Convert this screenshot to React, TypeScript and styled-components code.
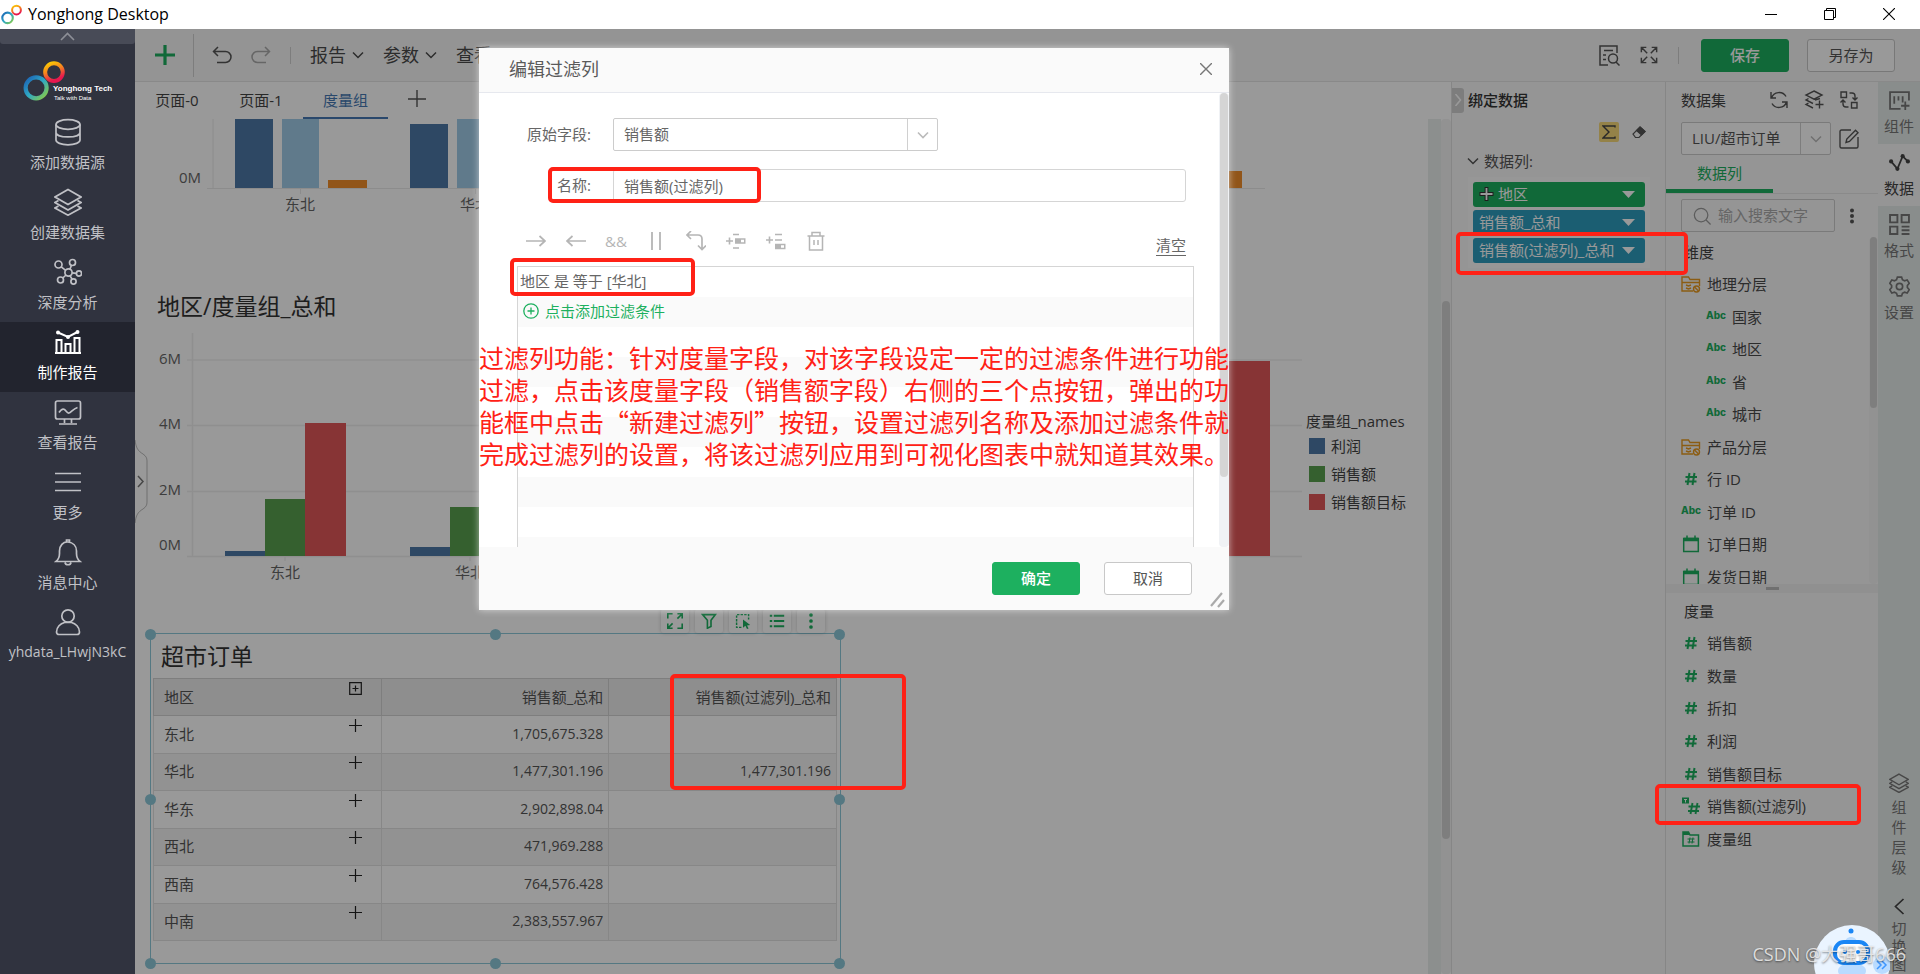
import React from "react";
import styled, { createGlobalStyle, css } from "styled-components";

const GREEN = "#1db05f";
const FONT = `"Open Sans", "Noto Sans CJK SC", sans-serif`;

const Global = createGlobalStyle`
  *, *::before, *::after { box-sizing: border-box; }
  body { margin: 0; font-family: ${FONT}; font-size: 15px; line-height: 20px; color: #444; background: #fff; overflow: hidden; }
  button, input, select { font: inherit; color: inherit; }
  button { padding: 0; border: 0; background: none; cursor: pointer; }
  svg { display: block; flex: none; }
  h1, h2, p { margin: 0; font-weight: 400; }
`;

/* ---------- icons ---------- */

type IconProps = {
  size?: number;
  box?: string;
  sw?: number;
  color?: string;
  children: React.ReactNode;
};
const Icon = ({ size = 20, box = "0 0 20 20", sw = 1.4, color = "currentColor", children }: IconProps) => (
  <svg width={size} height={size} viewBox={box} fill="none" stroke={color} strokeWidth={sw} aria-hidden="true">
    {children}
  </svg>
);

const ChevronDown = ({ size = 12, sw = 1.5 }: { size?: number; sw?: number }) => (
  <Icon size={size} box="0 0 12 12" sw={sw}><path d="M1 3.500 6 8.500 11 3.500" /></Icon>
);
const IconDatabase = () => (
  <Icon size={28} box="0 0 28 28" sw={1.7}>
    <ellipse cx="14" cy="6.500" rx="12" ry="4.800" />
    <path d="M2 6.500V22c0 2.600 5 4.800 12 4.800S26 24.600 26 22V6.500M2 14.500c0 2.600 5 4.400 12 4.400s12-1.800 12-4.400" />
  </Icon>
);
const IconLayers = ({ size = 28, sw = 1.7 }: { size?: number; sw?: number }) => (
  <Icon size={size} box="0 0 28 28" sw={sw}>
    <path d="M14 1.500 27 9 14 16.500 1 9ZM4.500 12.500 1 14.500 14 22l13-7.500-3.500-2M4.500 18 1 20l13 7.200L27 20l-3.500-2" />
  </Icon>
);
const IconNetwork = () => (
  <Icon size={28} box="0 0 28 28" sw={1.7}>
    <circle cx="14.500" cy="14.500" r="3.600" />
    <circle cx="4.500" cy="6.500" r="3.500" />
    <circle cx="18.500" cy="4.500" r="3" />
    <circle cx="25" cy="15.500" r="2.600" />
    <circle cx="6.500" cy="22" r="3" />
    <circle cx="19.500" cy="23.500" r="2.600" />
    <path d="m7.200 8.800 4.500 3.500M17.500 7.200l-1.600 4M18 14.900l4.400.4M12 17l-3.200 3M16 17.800l2.200 3.600" />
  </Icon>
);
const IconReport = () => (
  <Icon size={28} box="0 0 28 28" sw={2}>
    <path d="M1 25h26M2.500 25V12h5v13M11.500 25v-9h5v9M20.500 25V10h5v15M4 4.500 14 9l9.500-5" />
    <circle cx="4" cy="4.500" r="1" /><circle cx="14" cy="9" r="1" /><circle cx="23.500" cy="4" r="1" />
  </Icon>
);
const IconMonitor = () => (
  <Icon size={28} box="0 0 28 28" sw={1.7}>
    <rect x="1.500" y="3" width="25" height="18" rx="2" />
    <path d="M5 14.500c2-3 4-4 5.500-3s2.500 4 4.500 3.500 4-4 8.500-5.500M10.500 21v4M17.500 21v4M5 26h18" />
  </Icon>
);
const IconMenu = () => (
  <Icon size={28} box="0 0 28 28" sw={1.7}><path d="M1 5.500h26M1 14h26M1 22.500h26" /></Icon>
);
const IconBell = () => (
  <Icon size={28} box="0 0 28 28" sw={1.7}>
    <path d="M2 23.500h24c-2.500-2-3.500-4-3.500-8v-2.500c0-5-3.500-8.500-8.500-9s-8.500 4-8.500 9v2.500c0 4-1 6-3.500 8ZM11 24.500c.5 3 5.500 3 6 0M12.500 4V2h3v2" />
  </Icon>
);
const IconUser = () => (
  <Icon size={28} box="0 0 28 28" sw={1.7}>
    <circle cx="14" cy="8" r="6.200" />
    <path d="M2.500 24c0-5 4-8.500 8-9.500h7c4 1 8 4.500 8 9.500 0 1.500-1 2.500-2.500 2.500H5c-1.500 0-2.500-1-2.500-2.500Z" />
  </Icon>
);

const Rings = ({ size }: { size: number }) => (
  <svg width={size} height={size} viewBox="0 0 40 40" fill="none" aria-hidden="true">
    <defs>
      <linearGradient id={`cool${size}`} x1="0" y1="0" x2="1" y2="1">
        <stop offset="0.1" stopColor="#1f6fb8" /><stop offset="0.5" stopColor="#2fa9c4" /><stop offset="1" stopColor="#8fce3f" />
      </linearGradient>
      <linearGradient id={`warm${size}`} x1="0" y1="0" x2="0.4" y2="1">
        <stop offset="0" stopColor="#fbd000" /><stop offset="0.5" stopColor="#f58220" /><stop offset="1" stopColor="#e6174f" />
      </linearGradient>
    </defs>
    <circle cx="12.500" cy="26.500" r="10" stroke={`url(#cool${size})`} strokeWidth="4" />
    <circle cx="29.500" cy="11.500" r="8.400" stroke={`url(#warm${size})`} strokeWidth="3.800" />
  </svg>
);

const IconAbc = styled.span`
  padding-bottom: 4px;
  font: 800 10px/14px Inter, "Liberation Sans", sans-serif;
  color: ${GREEN};
`;
const IconHash = () => (
  <Icon size={20} sw={2} color={GREEN}><path d="M8.500 4 6.500 16M13.500 4l-2 12M4.500 8H16M4 12.500h11.500" /></Icon>
);
const IconFolder = () => (
  <Icon size={20} color="#e89a20" sw={1.4}>
    <path d="M12 17H1V3h6.500L9 5.500h9.500V12M1 8.500h17.500M5 11l2.500 1L10 11M5 14l2.500 1 2.500-1" />
    <circle cx="15.500" cy="15" r="3" /><path d="m13.500 13 4 4" />
  </Icon>
);
const IconCalendar = () => (
  <Icon size={20} color={GREEN} sw={1.5}><path d="M2.700 4.500h14.600v13H2.700Z" /><path d="M2.700 5.500h14.600" strokeWidth={3.500} /><path d="M6 1.500v4M14 1.500v4" /></Icon>
);
const IconFilterHash = () => (
  <Icon size={20} color={GREEN} sw={1.9}>
    <path d="m11.500 7-2 11M16.500 7l-2 11M7.500 10.500H19M7 15h11" /><path d="M1 1.500h7v6H1Z" fill={GREEN} stroke="none" /><path d="M3 3.500h3M4.500 3.500v3" stroke="#fff" strokeWidth={1} />
  </Icon>
);
const IconGroup = () => (
  <Icon size={20} color={GREEN} sw={1.5}>
    <path d="M2 17V3h5.500l1.500 3h8.500v11Z" /><path d="M2 4.500h6" strokeWidth={3} /><path d="m9 8.500-1 6M12 8.500l-1 6M6.500 10h7M6.500 13h7" strokeWidth={1.100} />
  </Icon>
);

/* ---------- window frame ---------- */

const Window = styled.div`
  display: flex;
  flex-direction: column;
  height: 100vh;
`;
const TitleBar = styled.header`
  display: flex;
  align-items: center;
  gap: 6px;
  height: 29px;
  flex: none;
  padding: 0 2px 1px 1px;
  color: #000;
  font-size: 16px;
  line-height: 22px;
`;
const WindowButtons = styled.div`
  display: flex;
  margin-left: auto;
  button { display: flex; justify-content: center; width: 59px; }
`;
const Body = styled.div`
  display: flex;
  flex: 1;
  min-height: 0;
`;

/* ---------- side navigation ---------- */

const Sidebar = styled.nav`
  display: flex;
  flex-direction: column;
  width: 135px;
  flex: none;
  background: #30333f;
  color: #c0c1c6;
`;
const Collapse = styled.button`
  display: flex;
  justify-content: center;
  align-items: center;
  height: 15px;
  background: #484b57;
  border-radius: 0 0 3px 3px;
  color: #8d8f97;
`;
const Brand = styled.div`
  display: flex;
  height: 68px;
  padding: 16px 0 0 23px;
`;
const BrandText = styled.div`
  margin: 24px 0 0 -12px;
  font: 700 8px/10px "Liberation Sans", sans-serif;
  color: #fff;
  white-space: nowrap;
  small { display: block; padding-left: 1px; font-size: 6px; line-height: 9px; font-weight: 400; }
`;
const NavItem = styled.button<{ $active?: boolean }>`
  display: flex;
  flex-direction: column;
  align-items: center;
  gap: 6px;
  height: 70px;
  padding-top: 6px;
  ${(p) => p.$active && css`background: #22242e; color: #fff;`}
`;
const UserName = styled.span`
  font-size: 14px;
`;

/* ---------- main area ---------- */

const Main = styled.main`
  position: relative;
  display: flex;
  flex-direction: column;
  flex: 1;
  min-width: 0;
  overflow: hidden;
`;
const Toolbar = styled.div`
  display: flex;
  align-items: center;
  height: 53px;
  flex: none;
  padding: 0 25px 0 19px;
  background: #f7f7f7;
  border-bottom: 1px solid #e4e4e4;
  font-size: 18px;
`;
const ToolButton = styled.button<{ $w: number; $muted?: boolean }>`
  display: flex;
  align-items: center;
  justify-content: center;
  width: ${(p) => p.$w}px;
  height: 32px;
  color: ${(p) => (p.$muted ? "#aaa" : "#555")};
`;
const Rule = styled.i<{ $h: number; $mx: number }>`
  width: 1px;
  height: ${(p) => p.$h}px;
  margin: 0 ${(p) => p.$mx}px;
  background: #d0d0d0;
`;
const ToolGroup = styled.div<{ $left: number; $gap: number }>`
  display: flex;
  gap: ${(p) => p.$gap}px;
  margin-left: ${(p) => p.$left}px;
`;
const MenuButton = styled.button`
  display: flex;
  align-items: center;
  gap: 6px;
  white-space: nowrap;
  color: #4a4a4a;
`;
const Spacer = styled.span`
  flex: 1;
`;
const Button = styled.button<{ $primary?: boolean }>`
  width: 88px;
  height: 33px;
  padding-bottom: 1px;
  border: 1px solid ${(p) => (p.$primary ? GREEN : "#c8c8c8")};
  border-radius: 3px;
  background: ${(p) => (p.$primary ? GREEN : "#fff")};
  color: ${(p) => (p.$primary ? "#fff" : "#555")};
  font-size: 15px;
  font-weight: ${(p) => (p.$primary ? 500 : 400)};
`;
const Workspace = styled.div`
  display: grid;
  grid-template-columns: minmax(0, 1fr) 214px 213px 42px;
  flex: 1;
  min-height: 0;
`;

/* ---------- report canvas ---------- */

const Report = styled.section`
  display: flex;
  flex-direction: column;
  min-height: 0;
`;
const Tabs = styled.div`
  display: flex;
  height: 37px;
  flex: none;
`;
const Tab = styled.button<{ $active?: boolean }>`
  min-width: 84px;
  padding: 0 20px;
  border-bottom: 2px solid ${(p) => (p.$active ? "#4679b4" : "transparent")};
  color: ${(p) => (p.$active ? "#4679b4" : "#444")};
  white-space: nowrap;
`;
const Scroller = styled.div`
  display: flex;
  flex: 1;
  min-height: 0;
`;
const Page = styled.div`
  position: relative;
  flex: 1;
  min-width: 0;
  overflow: hidden;
  background: #fff;
`;
const Gutter = styled.div`
  width: 13px;
  background: #eaeeed;
`;
const Track = styled.div<{ $w: number; $top: number; $thumb: number; $color?: string; $bg?: string }>`
  width: ${(p) => p.$w}px;
  flex: none;
  padding: ${(p) => p.$top}px 1px 0;
  background: ${(p) => p.$bg ?? "#f4f4f4"};
  border-radius: 4px;
  &::before {
    content: "";
    display: block;
    height: ${(p) => p.$thumb}px;
    border-radius: 4px;
    background: ${(p) => p.$color ?? "#d3d3d3"};
  }
`;
const WidgetTitle = styled.h2`
  font-size: 23px;
  line-height: 32px;
  color: #333;
  white-space: nowrap;
`;
const ChartTitle = styled(WidgetTitle)`
  margin: 65px 0 2px 22px;
`;
const ChartRow = styled.div`
  display: flex;
`;
const ChartSvg = styled.svg`
  font-family: ${FONT};
  font-size: 15px;
  fill: #666;
`;
const Legend = styled.ul`
  margin: 86px 0 0;
  padding: 0;
  list-style: none;
  color: #444;
  white-space: nowrap;
  li { display: flex; align-items: center; gap: 6px; height: 28px; padding-left: 3px; }
  li:first-child { height: 22px; padding: 0; }
`;
const Swatch = styled.i<{ $c: string }>`
  width: 16px;
  height: 16px;
  background: ${(p) => p.$c};
`;
const Drawer = styled.button`
  position: absolute;
  left: 0;
  top: 320px;
  color: #777;
`;

const Widget = styled.section`
  position: relative;
  width: 691px;
  height: 331px;
  margin: 43px 0 0 15px;
  padding: 6px 2px 0;
  border: 1px solid #8cc8d9;
`;
const TableTitle = styled(WidgetTitle)`
  margin: 0 0 6px 8px;
`;
const Handle = styled.i<{ $x: number; $y: number }>`
  position: absolute;
  left: calc(${(p) => p.$x}% - 6px);
  top: calc(${(p) => p.$y}% - 5px);
  width: 11px;
  height: 11px;
  border-radius: 50%;
  background: #8cc8d9;
`;
const FloatTools = styled.div`
  position: absolute;
  right: 15px;
  top: -25px;
  display: flex;
  gap: 6px;
  button {
    display: flex;
    align-items: center;
    justify-content: center;
    width: 28px;
    height: 24px;
    border-radius: 3px;
    background: #fff;
    box-shadow: 0 0 4px rgba(0, 0, 0, 0.2);
    color: ${GREEN};
  }
`;
const Table = styled.table`
  width: 684px;
  height: 263px;
  border-collapse: collapse;
  table-layout: fixed;
  color: #555;
  tr { height: 37px; }
  th, td {
    padding: 0 5px 1px;
    border: 1px solid #e2e2e2;
    font-weight: 400;
    text-align: right;
  }
  td { font-size: 14px; }
  th:first-child, td:first-child { padding-left: 10px; font-size: 15px; text-align: left; }
  thead th { background: #ededed; border-color: #d2d2d2; }
  tbody tr:nth-child(even) { background: #f3f3f3; }
`;
const RegionCell = styled.span`
  display: flex;
  justify-content: space-between;
  padding-right: 14px;
  svg { margin-top: -5px; color: #222; }
`;

/* ---------- binding panel ---------- */

const Panel = styled.aside`
  display: flex;
  flex-direction: column;
  min-height: 0;
  border-left: 1px solid #e0e0e0;
  background: #f9f9f9;
`;
const BindHead = styled.div`
  display: flex;
  align-items: center;
  gap: 4px;
  height: 36px;
  color: #333;
  font-weight: 500;
  button {
    display: flex;
    align-items: center;
    justify-content: center;
    width: 12px;
    height: 25px;
    border-radius: 0 3px 3px 0;
    background: #d0d0d0;
    color: #fff;
  }
`;
const BindTools = styled.div`
  display: flex;
  align-items: center;
  justify-content: flex-end;
  gap: 13px;
  height: 28px;
  padding: 0 20px 0 0;
`;
const SumButton = styled.button`
  display: flex;
  align-items: center;
  justify-content: center;
  width: 20px;
  height: 20px;
  border-radius: 2px;
  background: #f7d978;
  color: #444;
`;
const BindSection = styled.div`
  display: flex;
  align-items: center;
  gap: 5px;
  height: 29px;
  padding-left: 15px;
  color: #555;
`;
const Pills = styled.div`
  display: flex;
  flex-direction: column;
  gap: 3px;
  margin: 2px 15px 0 16px;
  padding: 5px;
  background: #fcfcfc;
`;
const Pill = styled.button<{ $c: string }>`
  display: flex;
  align-items: center;
  gap: 4px;
  height: 25px;
  padding: 0 10px 1px 6px;
  border-radius: 3px;
  background: ${(p) => p.$c};
  color: #fff;
  white-space: nowrap;
  svg:last-child { margin-left: auto; }
`;

/* ---------- data set panel ---------- */

const DataHead = styled.div`
  display: flex;
  align-items: center;
  gap: 15px;
  height: 36px;
  flex: none;
  padding: 0 19px 0 15px;
  color: #555;
  span { flex: 1; white-space: nowrap; color: #444; }
`;
const DataSelect = styled.div`
  display: flex;
  align-items: center;
  gap: 8px;
  flex: none;
  margin: 4px 0 0;
  padding-left: 15px;
  color: #555;
`;
const SelectBox = styled.div<{ $w: string }>`
  display: flex;
  width: ${(p) => p.$w};
  height: 33px;
  border: 1px solid #ccc;
  border-radius: 2px;
  background: #fff;
  select {
    flex: 1;
    min-width: 0;
    padding: 0 0 2px 10px;
    border: 0;
    background: none;
    appearance: none;
    outline: 0;
  }
  span {
    display: flex;
    align-items: center;
    justify-content: center;
    width: 30px;
    border-left: 1px solid #d0d0d0;
    color: #bbb;
  }
`;
const DataTab = styled.div`
  display: flex;
  height: 39px;
  flex: none;
  border-bottom: 1px solid #e6e6e6;
  button { width: 107px; padding: 2px 0 0; border-bottom: 4px solid ${GREEN}; color: ${GREEN}; }
`;
const SearchRow = styled.div`
  display: flex;
  align-items: center;
  gap: 8px;
  flex: none;
  padding: 5px 0 5px 15px;
  color: #555;
`;
const SearchBox = styled.label`
  display: flex;
  align-items: center;
  gap: 7px;
  width: 154px;
  height: 33px;
  padding-left: 11px;
  border: 1px solid #ccc;
  border-radius: 2px;
  color: #999;
  input { flex: 1; min-width: 0; padding: 0 0 2px; border: 0; background: none; outline: 0; }
  input::placeholder { color: #aaa; opacity: 1; }
`;
const Dimensions = styled.div`
  display: flex;
  height: 347px;
  flex: none;
  overflow: hidden;
`;
const FieldBlock = styled.div`
  flex: 1;
  min-width: 0;
`;
const GroupName = styled.h2`
  height: 32px;
  padding-left: 18px;
  font-size: 15px;
  line-height: 30px;
  color: #444;
`;
const Fields = styled.ul<{ $h: number }>`
  display: grid;
  grid-auto-rows: 1fr;
  height: ${(p) => p.$h}px;
  margin: 0;
  padding: 0 0 0 15px;
  list-style: none;
`;
const Field = styled.li<{ $child?: boolean }>`
  display: flex;
  align-items: center;
  gap: 6px;
  padding: 0 0 2px ${(p) => (p.$child ? 25 : 0)}px;
  color: #4a4a4a;
  white-space: nowrap;
`;
const FieldIcon = styled.span`
  display: flex;
  align-items: center;
  justify-content: center;
  width: 20px;
`;
const Splitter = styled.div`
  display: flex;
  justify-content: center;
  height: 9px;
  flex: none;
  padding-top: 3px;
  background: #f0f0f0;
  &::before { content: ""; width: 13px; height: 3px; background: #bbb; }
`;
const Measures = styled.div`
  padding-top: 3px;
`;

/* ---------- right rail ---------- */

const Rail = styled.aside`
  display: flex;
  flex-direction: column;
  min-height: 0;
  background: #e5ebe9;
  color: #777;
`;
const RailItem = styled.button<{ $active?: boolean }>`
  display: flex;
  flex-direction: column;
  align-items: center;
  gap: 5px;
  height: 62px;
  flex: none;
  padding-top: 8px;
  ${(p) => p.$active && css`background: #f9f9f9; color: #444;`}
`;
const RailBottom = styled.div`
  display: flex;
  flex-direction: column;
  align-items: center;
  margin-top: auto;
`;
const Upright = styled.span<{ $lh: number; $mb: number }>`
  width: 15px;
  margin: 4px 0 ${(p) => p.$mb}px;
  line-height: ${(p) => p.$lh}px;
  word-break: break-all;
`;

/* ---------- dialog ---------- */

const Shade = styled.div`
  position: absolute;
  inset: 0;
  z-index: 1;
  background: rgba(0, 0, 0, 0.4);
`;
const Dialog = styled.section`
  position: absolute;
  left: 344px;
  top: 19px;
  z-index: 2;
  width: 750px;
  background: #fff;
  color: #666;
  box-shadow: 0 0 7px rgba(255, 255, 255, 0.6);
`;
const DialogHead = styled.header`
  display: flex;
  align-items: center;
  justify-content: space-between;
  height: 45px;
  padding: 0 17px 2px 30px;
  border-bottom: 1px solid #e6e8ee;
  background: #fafafa;
  h1 { font-size: 18px; line-height: 24px; color: #5a5a5a; }
  button { color: #777; }
`;
const DialogBody = styled.div`
  display: flex;
  height: 454px;
  overflow: hidden;
`;
const Form = styled.div`
  flex: 1;
  min-width: 0;
  padding-top: 25px;
`;
const FormRow = styled.div`
  display: grid;
  grid-template-columns: 112px 1fr;
  column-gap: 22px;
  align-items: center;
  margin: 0 33px 18px 0;
  label { padding-bottom: 2px; text-align: right; }
`;
const TextInput = styled.input`
  width: 100%;
  height: 33px;
  padding: 0 10px 1px;
  border: 1px solid #d5d5d5;
  border-radius: 3px;
  outline: 0;
`;
const ConditionTools = styled.div`
  display: flex;
  height: 30px;
  margin: 24px 33px 10px 37px;
  color: #b5b5b5;
  button { display: flex; align-items: center; justify-content: center; width: 40px; }
`;
const Clear = styled.a`
  align-self: flex-end;
  margin-left: auto;
  border-bottom: 1px solid #666;
  line-height: 20px;
  color: #666;
  text-decoration: none;
`;
const Conditions = styled.ul`
  height: 320px;
  margin: 0 25px 0 38px;
  padding: 0;
  border: 1px solid #d5d5d5;
  list-style: none;
  li { display: flex; align-items: center; height: 30px; padding: 0 0 2px 2px; white-space: pre; }
  li:nth-child(even) { background: #fafafa; }
`;
const AddCondition = styled.button`
  display: flex;
  align-items: center;
  gap: 6px;
  padding-left: 3px;
  color: ${GREEN};
`;
const DialogFoot = styled.footer`
  display: flex;
  align-items: center;
  justify-content: flex-end;
  gap: 24px;
  height: 63px;
  padding: 0 37px 0 0;
  background: #fafafa;
`;
const Grip = styled.span`
  position: absolute;
  right: 3px;
  bottom: 2px;
`;

/* ---------- notes drawn over the screen ---------- */

const markFrame = css`
  position: absolute;
  z-index: 3;
  border: 4px solid #ff2116;
  border-radius: 5px;
  pointer-events: none;
`;
const NameMark = styled.div`
  ${markFrame}
  left: 69px; top: 119px; width: 213px; height: 36px;
`;
const ConditionMark = styled.div`
  ${markFrame}
  left: 31px; top: 210px; width: 185px; height: 38px;
`;
const BindMark = styled.div`
  ${markFrame}
  right: 232px; top: 203px; width: 232px; height: 43px;
`;
const MeasureMark = styled.div`
  ${markFrame}
  right: 59px; top: 755px; width: 206px; height: 41px;
`;
const TableMark = styled.div`
  ${markFrame}
  left: 535px; top: 645px; width: 236px; height: 116px;
`;
const Note = styled.p`
  position: absolute;
  left: 0;
  top: 293px;
  width: 760px;
  font-family: "Noto Sans CJK SC", sans-serif;
  font-size: 25px;
  line-height: 32px;
  color: #ff2116;
  white-space: pre-line;
`;
const Robot = styled.button`
  position: absolute;
  right: 30px;
  bottom: -27px;
  z-index: 3;
`;
const Watermark = styled.span`
  position: absolute;
  right: 14px;
  bottom: 8px;
  z-index: 4;
  font-size: 18px;
  line-height: 24px;
  color: rgba(235, 235, 235, 0.9);
  text-shadow: 0 1px 2px rgba(0, 0, 0, 0.5);
  white-space: nowrap;
`;

/* ---------- data ---------- */

const nav = [
  { label: "添加数据源", icon: <IconDatabase /> },
  { label: "创建数据集", icon: <IconLayers /> },
  { label: "深度分析", icon: <IconNetwork /> },
  { label: "制作报告", icon: <IconReport />, active: true },
  { label: "查看报告", icon: <IconMonitor /> },
  { label: "更多", icon: <IconMenu /> },
  { label: "消息中心", icon: <IconBell /> },
];
const rows = [
  ["东北", "1,705,675.328", ""],
  ["华北", "1,477,301.196", "1,477,301.196"],
  ["华东", "2,902,898.04", ""],
  ["西北", "471,969.288", ""],
  ["西南", "764,576.428", ""],
  ["中南", "2,383,557.967", ""],
];
const abc = <IconAbc>Abc</IconAbc>;
const dimensions = [
  { label: "地理分层", icon: <IconFolder /> },
  { label: "国家", icon: abc, child: true },
  { label: "地区", icon: abc, child: true },
  { label: "省", icon: abc, child: true },
  { label: "城市", icon: abc, child: true },
  { label: "产品分层", icon: <IconFolder /> },
  { label: "行 ID", icon: <IconHash /> },
  { label: "订单 ID", icon: abc },
  { label: "订单日期", icon: <IconCalendar /> },
  { label: "发货日期", icon: <IconCalendar /> },
];
const measures = [
  { label: "销售额", icon: <IconHash /> },
  { label: "数量", icon: <IconHash /> },
  { label: "折扣", icon: <IconHash /> },
  { label: "利润", icon: <IconHash /> },
  { label: "销售额目标", icon: <IconHash /> },
  { label: "销售额(过滤列)", icon: <IconFilterHash /> },
  { label: "度量组", icon: <IconGroup /> },
];
const note = `过滤列功能：针对度量字段，对该字段设定一定的过滤条件进行功能
过滤，点击该度量字段（销售额字段）右侧的三个点按钮，弹出的功
能框中点击“新建过滤列”按钮，设置过滤列名称及添加过滤条件就
完成过滤列的设置，将该过滤列应用到可视化图表中就知道其效果。`;

const Bar = ({ x, y, w, base, c }: { x: number; y: number; w: number; base: number; c: string }) => (
  <rect x={x} y={y} width={w} height={base - y} fill={c} />
);

const TopChart = () => (
  <ChartSvg width="1150" height="106" viewBox="135 119 1150 106" role="img" aria-label="东北 华北">
    <path d="M213 119v69M207 188.500h1058M300.500 189v5M475.500 189v5" stroke="#eaeaea" fill="none" />
    <Bar x={235} y={119} w={38} base={188} c="#4e79a7" />
    <Bar x={282} y={119} w={37} base={188} c="#a0cbe8" />
    <Bar x={328} y={180} w={39} base={188} c="#f28e2b" />
    <Bar x={410} y={124} w={38} base={188} c="#4e79a7" />
    <Bar x={457} y={119} w={37} base={188} c="#a0cbe8" />
    <Bar x={1203} y={171} w={39} base={188} c="#f28e2b" />
    <text x="201" y="183" textAnchor="end">0M</text>
    <text x="300" y="210" textAnchor="middle">东北</text>
    <text x="475" y="210" textAnchor="middle">华北</text>
  </ChartSvg>
);

const MeasureChart = () => (
  <ChartSvg width="1171" height="266" viewBox="135 324 1171 266" role="img" aria-label="地区/度量组_总和">
    <path d="M192.500 333v223M187 360h1115M187 425.500h1115M187 491.500h1115M187 556.500h1115M285 557v4M470 557v4" stroke="#efefef" strokeWidth="1.500" fill="none" />
    <Bar x={225} y={551} w={40} base={556} c="#4e79a7" />
    <Bar x={265} y={499} w={40} base={556} c="#59a14f" />
    <Bar x={305} y={423} w={41} base={556} c="#e15759" />
    <Bar x={410} y={547} w={40} base={556} c="#4e79a7" />
    <Bar x={450} y={507} w={40} base={556} c="#59a14f" />
    <Bar x={1229} y={361} w={41} base={556} c="#e15759" />
    <text x="181" y="364" textAnchor="end">6M</text>
    <text x="181" y="429" textAnchor="end">4M</text>
    <text x="181" y="495" textAnchor="end">2M</text>
    <text x="181" y="550" textAnchor="end">0M</text>
    <text x="285" y="578" textAnchor="middle">东北</text>
    <text x="470" y="578" textAnchor="middle">华北</text>
  </ChartSvg>
);

const PlusThin = ({ boxed }: { boxed?: boolean }) => (
  <Icon size={13} box="0 0 13 13" sw={1.2}>
    {boxed ? <path d="M.7.700h11.600v11.600H.7ZM6.500 3.500v6M3.500 6.500h6" /> : <path d="M6.500 0v13M0 6.500h13" />}
  </Icon>
);
const IconExpand = () => (
  <Icon size={18} sw={1.6}>
    <path d="M7 1.500H1.500V7M1.500 1.500 8 8M13 1.500h5.500V7M18.500 1.500 12 8M7 18.500H1.500V13M1.500 18.500 8 12M13 18.500h5.500V13M18.500 18.500 12 12" />
  </Icon>
);
const Triangle = () => (
  <svg width="13" height="7" viewBox="0 0 13 7" aria-hidden="true"><path d="M0 0h13L6.500 7Z" fill="#fff" /></svg>
);

const FieldList = ({ items, height }: { items: { label: string; icon: React.ReactNode; child?: boolean }[]; height: number }) => (
  <Fields $h={height}>
    {items.map((f) => (
      <Field key={f.label} $child={f.child}>
        <FieldIcon>{f.icon}</FieldIcon>
        {f.label}
      </Field>
    ))}
  </Fields>
);

const FilterDialog = () => (
  <Dialog role="dialog" aria-labelledby="dialog-title">
    <DialogHead>
      <h1 id="dialog-title">编辑过滤列</h1>
      <button aria-label="关闭"><Icon size={12} box="0 0 12 12" sw={1.4}><path d="m0 0 12 12M12 0 0 12" /></Icon></button>
    </DialogHead>
    <DialogBody>
      <Form>
        <FormRow>
          <label htmlFor="source-field">原始字段:</label>
          <SelectBox $w="325px">
            <select id="source-field" defaultValue="销售额"><option>销售额</option></select>
            <span><ChevronDown sw={1.6} /></span>
          </SelectBox>
        </FormRow>
        <FormRow>
          <label htmlFor="column-name">名称:</label>
          <TextInput id="column-name" defaultValue="销售额(过滤列)" />
        </FormRow>
        <ConditionTools>
          <button aria-label="右移"><Icon sw={1.7}><path d="M0 10h19M13.500 5l5.500 5-5.500 5" /></Icon></button>
          <button aria-label="左移"><Icon sw={1.7}><path d="M20 10H1M6.500 5 1 10l5.500 5" /></Icon></button>
          <button>&amp;&amp;</button>
          <button aria-label="或"><Icon sw={1.8}><path d="M6 1v18M14 1v18" /></Icon></button>
          <button aria-label="切换"><Icon sw={1.7}><path d="M5 0 1 4l4 4M1 4h11c3 0 4 1 4 4v10M12 14.500l4 4 4-4" /></Icon></button>
          <button aria-label="上方插入"><Icon sw={1.6}><path d="M0 10h7M3.500 6.500v7M7 3.500h6M7 17h6" /><path d="M9 10h10.500" strokeWidth={5.500} /><path d="M15 10h3" stroke="#fff" strokeWidth={2.500} /></Icon></button>
          <button aria-label="下方插入"><Icon sw={1.6}><path d="M0 9h7M3.500 5.500v7M9 3.500h7M9 9h7" /><path d="M9 15.500h10.500" strokeWidth={5.500} /><path d="M15 15.500h3" stroke="#fff" strokeWidth={2.500} /></Icon></button>
          <button aria-label="删除"><Icon sw={1.5}><path d="M1.500 5h17M3.500 5v14h13V5M6 5V1.500h8V5M8 9v5M12 9v5" /></Icon></button>
          <Clear href="#clear">清空</Clear>
        </ConditionTools>
        <Conditions>
          <li>地区 是 等于 [华北]</li>
          <li>
            <AddCondition>
              <Icon size={16} box="0 0 16 16" sw={1.3}><circle cx="8" cy="8" r="7.200" /><path d="M8 4.500v7M4.500 8h7" /></Icon>
              点击添加过滤条件
            </AddCondition>
          </li>
          {[3, 4, 5, 6, 7, 8, 9, 10].map((n) => <li key={n} />)}
        </Conditions>
      </Form>
      <Track $w={10} $top={0} $thumb={384} $color="#d5d5d5" $bg="#f0f2f5" />
    </DialogBody>
    <DialogFoot>
      <Button $primary>确定</Button>
      <Button>取消</Button>
    </DialogFoot>
    <Grip><Icon size={16} box="0 0 16 16" sw={2.2} color="#aaa"><path d="M1 14 12 1M8 15l6-7" /></Icon></Grip>
    <NameMark />
    <ConditionMark />
    <Note>{note}</Note>
  </Dialog>
);

export default function App() {
  return (
    <Window>
      <Global />
      <TitleBar>
        <Rings size={21} />
        Yonghong Desktop
        <WindowButtons>
          <button aria-label="最小化"><Icon size={12} box="0 0 12 12" sw={1}><path d="M0 6.500h12" /></Icon></button>
          <button aria-label="还原"><Icon size={12} box="0 0 12 12" sw={1}><path d="M.5 2.500h9v9h-9ZM2.500 2.500v-2h9v9h-2" /></Icon></button>
          <button aria-label="关闭窗口"><Icon size={12} box="0 0 12 12" sw={1.1}><path d="m0 0 12 12M12 0 0 12" /></Icon></button>
        </WindowButtons>
      </TitleBar>
      <Body>
        <Sidebar>
          <Collapse aria-label="收起"><Icon size={15} box="0 0 15 15" sw={1.6}><path d="m1 11 6.500-6.500L14 11" /></Icon></Collapse>
          <Brand>
            <Rings size={42} />
            <BrandText>Yonghong Tech<small>Talk with Data</small></BrandText>
          </Brand>
          {nav.map((n) => (
            <NavItem key={n.label} $active={n.active}>{n.icon}{n.label}</NavItem>
          ))}
          <NavItem><IconUser /><UserName>yhdata_LHwjN3kC</UserName></NavItem>
        </Sidebar>
        <Main>
          <Toolbar>
            <ToolButton $w={21} aria-label="新建"><Icon size={20} sw={3.2} color={GREEN}><path d="M10 0v20M0 10h20" /></Icon></ToolButton>
            <Rule $h={43} $mx={18} />
            <ToolButton $w={20} aria-label="撤销"><Icon sw={1.5}><path d="M6 2 1.500 6.500 6 11M2 6.500h11.500a5.500 5.500 0 0 1 0 11H5" /></Icon></ToolButton>
            <ToolButton $w={58} $muted aria-label="重做"><Icon sw={1.5}><path d="m14 2 4.500 4.500L14 11M18 6.500H6.500a5.500 5.500 0 0 0 0 11H15" /></Icon></ToolButton>
            <Rule $h={17} $mx={0} />
            <ToolGroup $left={19} $gap={19}>
              <MenuButton>报告<ChevronDown /></MenuButton>
              <MenuButton>参数<ChevronDown /></MenuButton>
              <MenuButton>查看<ChevronDown /></MenuButton>
            </ToolGroup>
            <Spacer />
            <ToolButton $w={39} aria-label="预览">
              <Icon size={21} box="0 0 21 21" sw={1.5}><path d="M9 20H1V1h17v7M5 5.500h9M4 10h3M4 14.500h3" /><circle cx="14" cy="13.500" r="4.500" /><path d="m17 17 3.500 3.500" /></Icon>
            </ToolButton>
            <ToolButton $w={39} aria-label="全屏"><IconExpand /></ToolButton>
            <Rule $h={17} $mx={10} />
            <ToolGroup $left={12} $gap={18}>
              <Button $primary>保存</Button>
              <Button>另存为</Button>
            </ToolGroup>
          </Toolbar>
          <Workspace>
            <Report>
              <Tabs>
                <Tab>页面-0</Tab>
                <Tab>页面-1</Tab>
                <Tab $active>度量组</Tab>
                <ToolButton $w={58} aria-label="添加页面"><Icon size={18} box="0 0 18 18" sw={1.4}><path d="M9 1v18M0 10h18" /></Icon></ToolButton>
              </Tabs>
              <Scroller>
                <Page>
                  <TopChart />
                  <ChartTitle>地区/度量组_总和</ChartTitle>
                  <ChartRow>
                    <MeasureChart />
                    <Legend>
                      <li>度量组_names</li>
                      <li><Swatch $c="#4e79a7" />利润</li>
                      <li><Swatch $c="#59a14f" />销售额</li>
                      <li><Swatch $c="#e15759" />销售额目标</li>
                    </Legend>
                  </ChartRow>
                  <Widget>
                    <TableTitle>超市订单</TableTitle>
                    <Table>
                      <thead>
                        <tr>
                          <th><RegionCell>地区<PlusThin boxed /></RegionCell></th>
                          <th>销售额_总和</th>
                          <th>销售额(过滤列)_总和</th>
                        </tr>
                      </thead>
                      <tbody>
                        {rows.map((r) => (
                          <tr key={r[0]}>
                            <td><RegionCell>{r[0]}<PlusThin /></RegionCell></td>
                            <td>{r[1]}</td>
                            <td>{r[2]}</td>
                          </tr>
                        ))}
                      </tbody>
                    </Table>
                    {[0, 50, 100].map((x) => [0, 50, 100].filter((y) => x !== 50 || y !== 50).map((y) => <Handle key={`${x}-${y}`} $x={x} $y={y} />))}
                    <FloatTools>
                      <button aria-label="放大"><Icon size={16} sw={2}><path d="M7 1H1v6M13 1h6v6M19 1l-6 6M7 19H1v-6M1 19l6-6M13 19h6v-6" /></Icon></button>
                      <button aria-label="过滤"><Icon size={16} sw={2}><path d="M2 2h16l-5.500 7v8L8 19V9Z" /></Icon></button>
                      <button aria-label="选择"><Icon size={16} sw={1.8}><path d="M8 18H2V2h15v6" strokeDasharray="3 1.500" /><path d="m10 8 9 7-4 .5 2 4-2 .5-2-4-3 2.500Z" fill={GREEN} stroke="none" /></Icon></button>
                      <button aria-label="列表"><Icon size={16} sw={2.4}><path d="M1 3.500h3M6 3.500h13M1 10h3M6 10h13M1 16.500h3M6 16.500h13" /></Icon></button>
                      <button aria-label="更多操作"><Icon size={16} color="none"><g fill={GREEN}><circle cx="10" cy="2.500" r="2.300" /><circle cx="10" cy="10" r="2.300" /><circle cx="10" cy="17.500" r="2.300" /></g></Icon></button>
                    </FloatTools>
                  </Widget>
                  <Drawer aria-label="展开">
                    <svg width="14" height="85" viewBox="0 0 14 85" fill="none" stroke="currentColor"><path d="M0 1c1 8 3 11 8 14 3 2 4 4 4 7v41c0 3-1 5-4 7-5 3-7 6-8 14" strokeOpacity="0.500" /><path d="m3 37 5 5.500L3 48" strokeWidth="1.500" /></svg>
                  </Drawer>
                </Page>
                <Gutter />
                <Track $w={10} $top={182} $thumb={538} />
              </Scroller>
            </Report>
            <Panel>
              <BindHead>
                <button aria-label="收起面板"><Icon size={12} box="0 0 12 12" sw={1.6}><path d="m3.500 0 5 6-5 6" /></Icon></button>
                绑定数据
              </BindHead>
              <BindTools>
                <SumButton aria-label="汇总"><Icon size={14} box="0 0 14 14" sw={1.4}><path d="M13 2.500V1H1l6 6-6 6h12v-1.500" /></Icon></SumButton>
                <ToolButton $w={13} aria-label="清除"><Icon size={14} box="0 0 14 14" sw={1.2}><path d="m8 2 5 4.500-6 6H3.500L1 9Z" /><path d="m8 2 5 4.500L9.500 10l-5-4.500Z" fill="currentColor" /></Icon></ToolButton>
              </BindTools>
              <BindSection><ChevronDown />数据列:</BindSection>
              <Pills>
                <Pill $c={GREEN}>
                  <Icon size={15} box="0 0 15 15" sw={1.8}><path d="M7.500 0v14M.5 7h14" stroke="#333" strokeWidth={3.800} /><path d="M7.500 1v12M1.500 7h12" /></Icon>
                  地区<Triangle />
                </Pill>
                <Pill $c="#2d9dbe">销售额_总和<Triangle /></Pill>
                <Pill $c="#2d9dbe">销售额(过滤列)_总和<Triangle /></Pill>
              </Pills>
            </Panel>
            <Panel>
              <DataHead>
                <span>数据集</span>
                <Icon><path d="M2.500 8A8 8 0 0 1 17 6.500M17.500 12A8 8 0 0 1 3 13.500M2 2v6h5M18 18v-6h-5" /></Icon>
                <Icon><path d="m10 1 8 4-8 4.200L2 5ZM4.500 8.500 2 10l7 3.500M4.500 13 2 14.500l7 3.500M11 10l5-1.500M15.500 10.500v8M11.500 14.500h8" /></Icon>
                <Icon><path d="M2 2h5.500v5.500H2ZM12.500 12.500H18V18h-5.500ZM10.500 3H13c2 0 3 1 3 3v3.500M13.500 7.500l2.500 2.500 2.500-2.500M4 10.500V14c0 2 1 3 3 3h2.500M1.500 12.500 4 10l2.500 2.500" /></Icon>
              </DataHead>
              <DataSelect>
                <SelectBox $w="150px">
                  <select aria-label="数据集" defaultValue="LIU/超市订单"><option>LIU/超市订单</option></select>
                  <span><ChevronDown /></span>
                </SelectBox>
                <ToolButton $w={20} aria-label="编辑"><Icon><path d="M12 1H2.500Q1 1 1 2.500v15Q1 19 2.500 19h15q1.500 0 1.500-1.500V8M7 13.500l.8-3.500 8.700-8.700 2.500 2.500-8.500 8.700Z" /></Icon></ToolButton>
              </DataSelect>
              <DataTab><button>数据列</button></DataTab>
              <SearchRow>
                <SearchBox>
                  <Icon size={18}><circle cx="9" cy="9" r="7.500" /><path d="m14.500 14.500 5 5" /></Icon>
                  <input aria-label="搜索" placeholder="输入搜索文字" />
                </SearchBox>
                <Icon size={18} box="0 0 18 18" color="none"><g fill="#555"><circle cx="9" cy="3.500" r="2" /><circle cx="9" cy="9" r="2" /><circle cx="9" cy="14.500" r="2" /></g></Icon>
              </SearchRow>
              <Dimensions>
                <FieldBlock>
                  <GroupName>维度</GroupName>
                  <FieldList items={dimensions} height={325} />
                </FieldBlock>
                <Track $w={9} $top={0} $thumb={171} />
              </Dimensions>
              <Splitter />
              <Measures>
                <GroupName>度量</GroupName>
                <FieldList items={measures} height={228} />
              </Measures>
            </Panel>
            <Rail>
              <RailItem>
                <Icon size={21} sw={1.7}><path d="M11 18H1V2h18v8M5 6v7M9 6v4M13 6v6M15.500 11v8M11.500 15h8" /></Icon>组件
              </RailItem>
              <RailItem $active>
                <Icon size={21} sw={1.7}><path d="m2 9 6 7 5-12 6 6" /><g fill="currentColor" stroke="none"><circle cx="2" cy="9" r="2" /><circle cx="8" cy="16" r="2" /><circle cx="13" cy="4" r="2" /><circle cx="18" cy="9" r="2" /></g></Icon>数据
              </RailItem>
              <RailItem>
                <Icon size={21} sw={1.8}><path d="M1 1h7v7H1ZM12 1h7v7h-7ZM1 12h7v7H1ZM12 12h7.500M12 15.500h7.500M12 19h7.500" /></Icon>格式
              </RailItem>
              <RailItem>
                <Icon size={21} sw={1.6}><circle cx="10" cy="10" r="3" /><path d="M8 1h4l.8 2.500 2 1 2.500-.8 2 3.300-1.800 2v2l1.800 2-2 3.300-2.500-.8-2 1L12 19H8l-.8-2.500-2-1-2.500.8-2-3.300 1.800-2V9L.7 7l2-3.300 2.500.8 2-1Z" /></Icon>设置
              </RailItem>
              <RailBottom>
                <IconLayers size={20} sw={2} />
                <Upright $lh={20} $mb={21}>组件层级</Upright>
                <Icon size={17} box="0 0 17 17" sw={1.7} color="#444"><path d="m12.500 1-8 7.500 8 7.500" /></Icon>
                <Upright $lh={18} $mb={1}>切换图</Upright>
              </RailBottom>
            </Rail>
          </Workspace>
          <Shade />
          <FilterDialog />
          <BindMark />
          <MeasureMark />
          <TableMark />
          <Robot aria-label="智能助手">
            <svg width="76" height="76" viewBox="0 0 76 76" fill="none">
              <circle cx="38" cy="38" r="38" fill="#eaf4ff" />
              <circle cx="68" cy="40" r="9" fill="#b9dbff" />
              <path d="m63 36 4 4-4 4M68 36l4 4-4 4" stroke="#3f97ff" strokeWidth="1.500" />
              <circle cx="37" cy="6" r="2.500" fill="#1a86f5" />
              <path d="M31 18c0-8 12-8 12 0Z" fill="#b9dbff" />
              <ellipse cx="38" cy="46" rx="14" ry="8" fill="#b9dbff" />
              <rect x="21" y="17" width="33" height="21" rx="9" fill="#fff" stroke="#1a86f5" strokeWidth="4" />
              <circle cx="31" cy="27" r="2" fill="#1a86f5" /><circle cx="44" cy="27" r="2" fill="#1a86f5" />
            </svg>
          </Robot>
          <Watermark>CSDN @大强哥666</Watermark>
        </Main>
      </Body>
    </Window>
  );
}
